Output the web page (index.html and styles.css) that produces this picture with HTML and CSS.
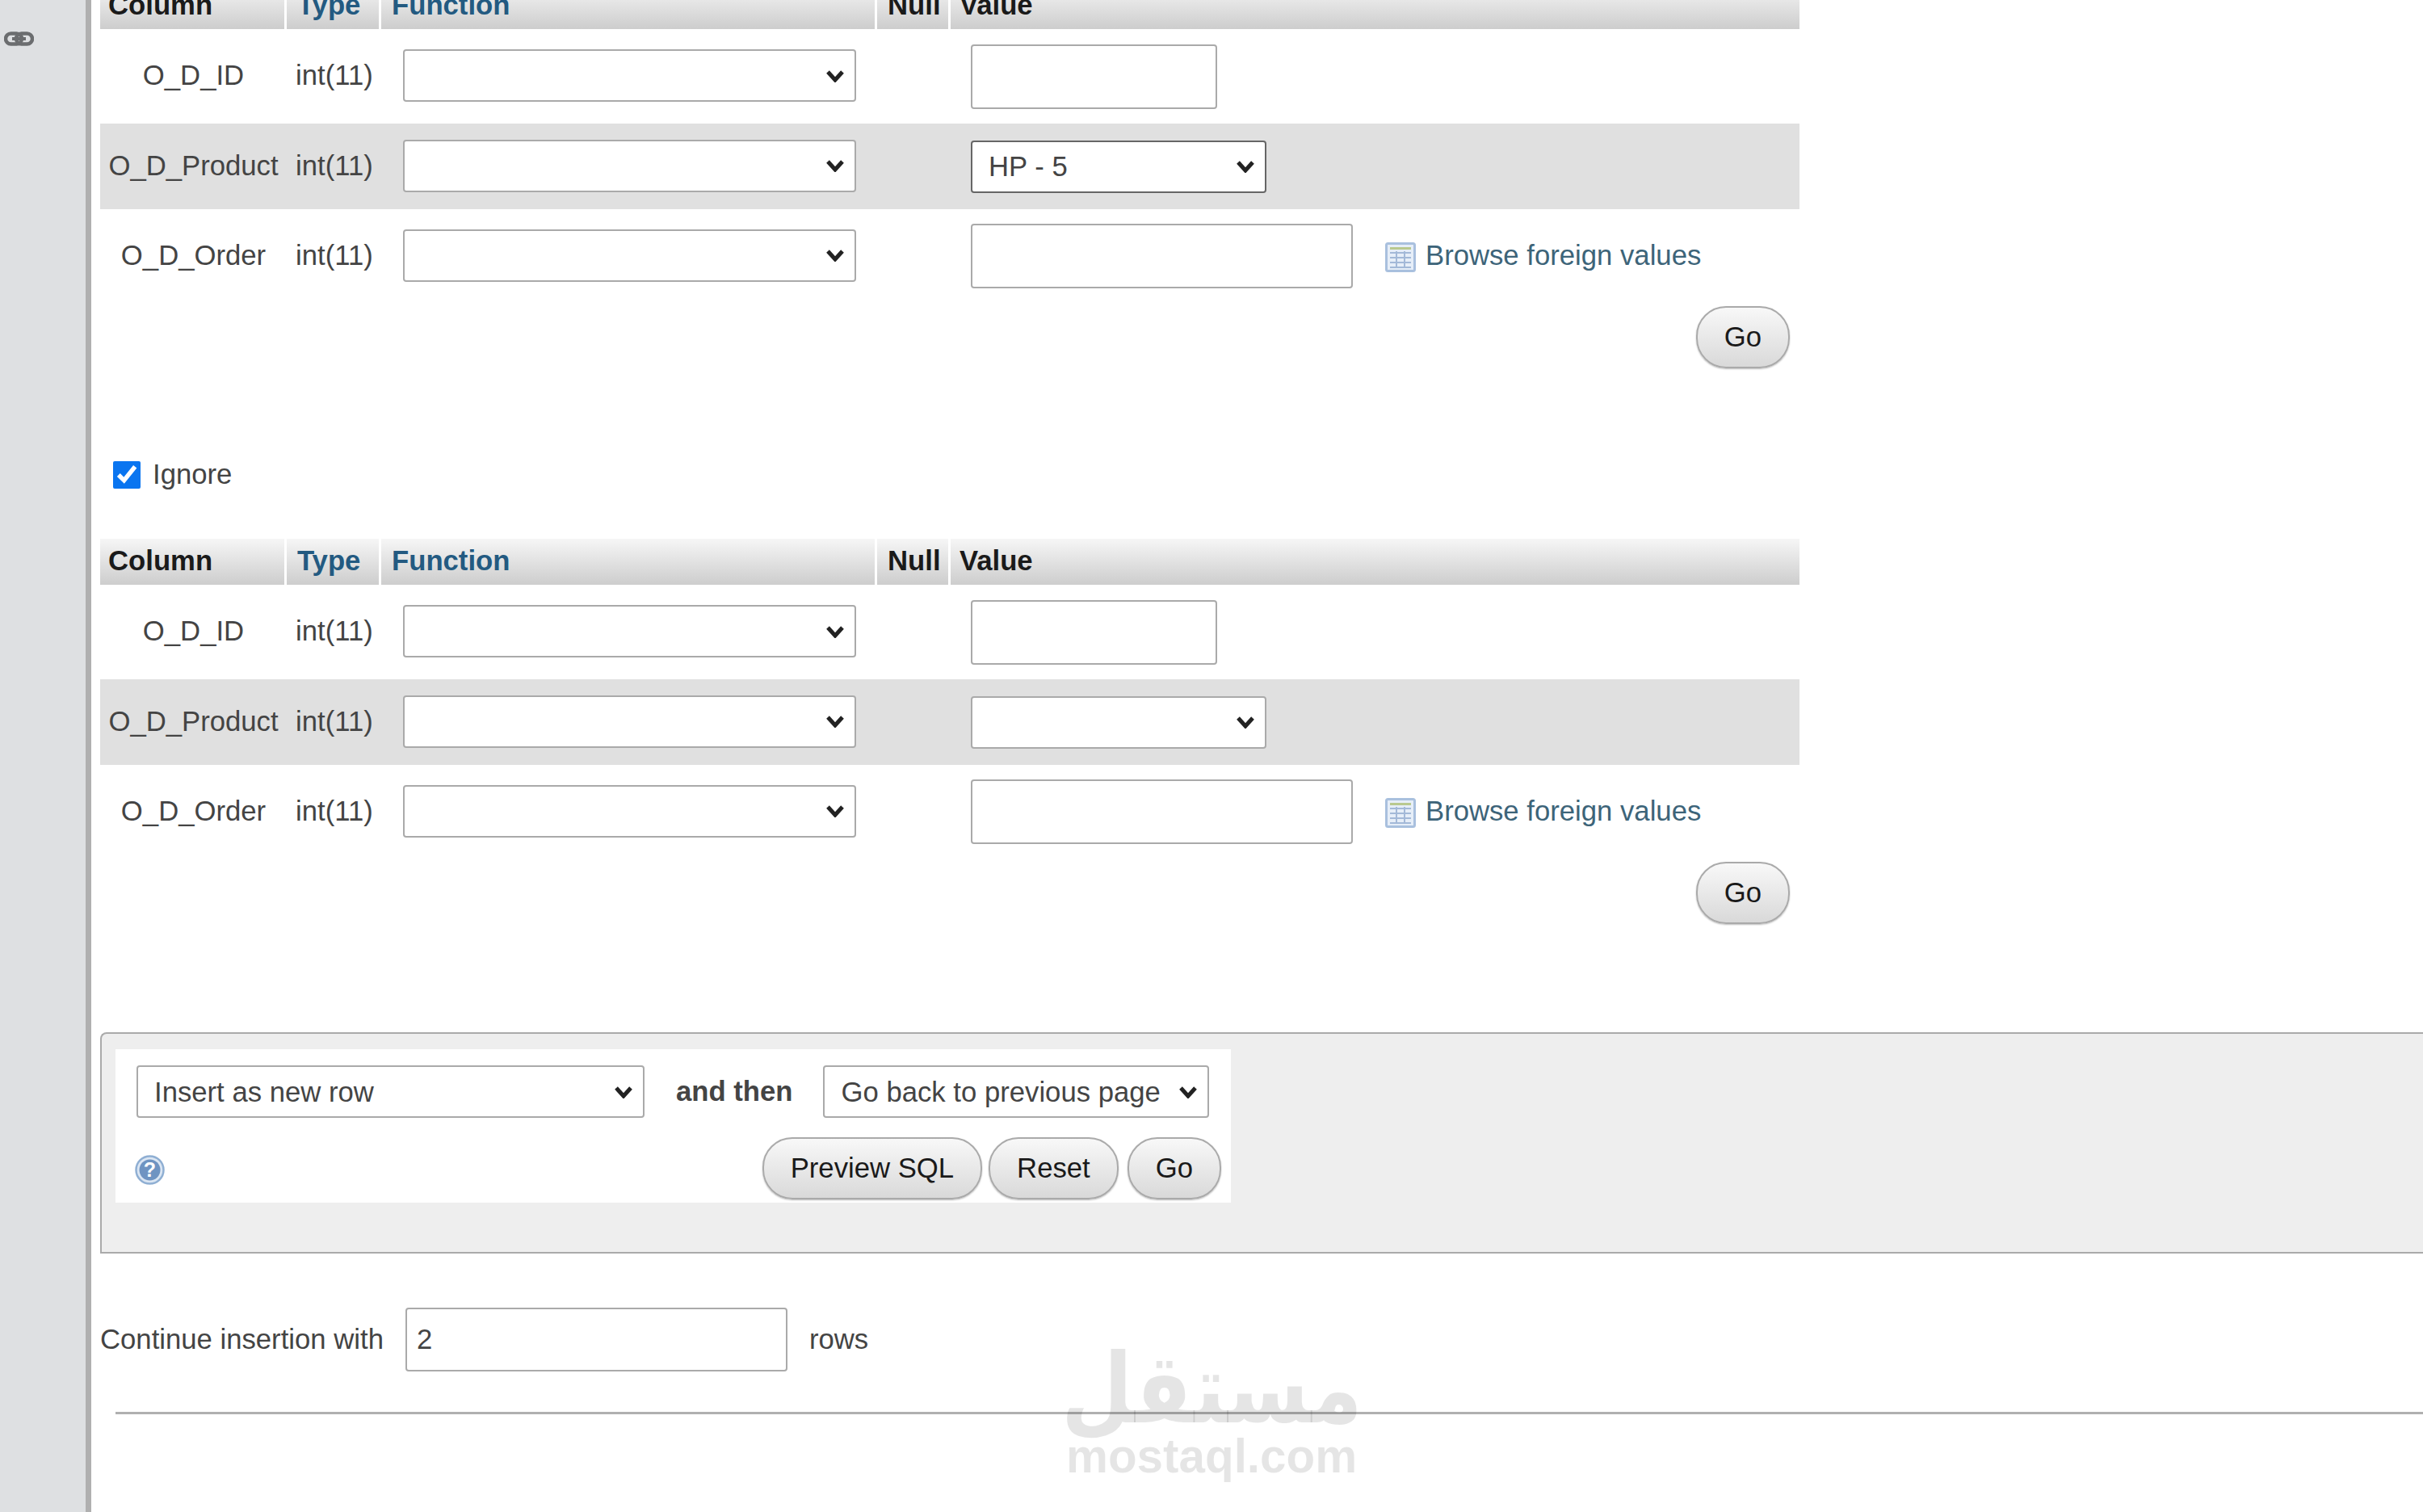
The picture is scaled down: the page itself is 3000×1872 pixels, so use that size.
FILE: index.html
```html
<!DOCTYPE html>
<html lang="en">
<head>
<meta charset="utf-8">
<title>Insert</title>
<link rel="stylesheet" href="styles.css">
</head>
<body>
<div class="page">
  <aside class="sidebar">
    <svg class="link-icon" viewBox="0 0 37 18" width="37" height="18" aria-hidden="true">
      <rect x="2" y="2.5" width="20" height="13" rx="6.5" fill="none" stroke="#6b6d6f" stroke-width="4.5"/>
      <rect x="15" y="2.5" width="20" height="13" rx="6.5" fill="none" stroke="#6b6d6f" stroke-width="4.5"/>
      <rect x="10" y="7" width="17" height="4" fill="#6b6d6f"/>
    </svg>
  </aside>
  <main class="main">
    <table class="insert-table first">
      <colgroup><col class="c-col"><col class="c-type"><col class="c-fn"><col class="c-null"><col class="c-val"></colgroup>
      <thead>
        <tr><th>Column</th><th class="link">Type</th><th class="link">Function</th><th class="mid">Null</th><th class="end">Value</th></tr>
      </thead>
      <tbody>
        <tr class="row-a"><td class="name">O_D_ID</td><td class="type">int(11)</td><td class="fn"><select class="field fn-select"><option></option></select></td><td></td><td class="val"><input class="field short" type="text"></td></tr>
        <tr class="row-b"><td class="name">O_D_Product</td><td class="type">int(11)</td><td class="fn"><select class="field fn-select"><option></option></select></td><td></td><td class="val"><select class="field fk-select active"><option>HP - 5</option></select></td></tr>
        <tr class="row-c"><td class="name">O_D_Order</td><td class="type">int(11)</td><td class="fn"><select class="field fn-select"><option></option></select></td><td></td><td class="val"><div class="val-line"><input class="field long" type="text"><a class="browse"><svg class="table-icon" viewBox="0 0 38 37" width="38" height="37" aria-hidden="true"><rect x="1.5" y="1.5" width="35" height="34" rx="2" fill="#e6eef8" stroke="#a9c0de" stroke-width="3"/><rect x="6" y="6" width="26" height="3" fill="#b9c98f"/><path d="M6 13h26M6 19h26M6 25h26M6 31h26M14 11v21M24 11v21" stroke="#a3b9d8" stroke-width="2" fill="none"/></svg><span class="browse-text">Browse foreign values</span></a></div></td></tr>
      </tbody>
      <tfoot>
        <tr class="row-foot"><td colspan="5"><button class="btn" type="button">Go</button></td></tr>
      </tfoot>
    </table>

    <label class="ignore"><input class="check" type="checkbox" checked>Ignore</label>

    <table class="insert-table">
      <colgroup><col class="c-col"><col class="c-type"><col class="c-fn"><col class="c-null"><col class="c-val"></colgroup>
      <thead>
        <tr><th>Column</th><th class="link">Type</th><th class="link">Function</th><th class="mid">Null</th><th class="end">Value</th></tr>
      </thead>
      <tbody>
        <tr class="row-a"><td class="name">O_D_ID</td><td class="type">int(11)</td><td class="fn"><select class="field fn-select"><option></option></select></td><td></td><td class="val"><input class="field short" type="text"></td></tr>
        <tr class="row-b"><td class="name">O_D_Product</td><td class="type">int(11)</td><td class="fn"><select class="field fn-select"><option></option></select></td><td></td><td class="val"><select class="field fk-select"><option></option></select></td></tr>
        <tr class="row-c"><td class="name">O_D_Order</td><td class="type">int(11)</td><td class="fn"><select class="field fn-select"><option></option></select></td><td></td><td class="val"><div class="val-line"><input class="field long" type="text"><a class="browse"><svg class="table-icon" viewBox="0 0 38 37" width="38" height="37" aria-hidden="true"><rect x="1.5" y="1.5" width="35" height="34" rx="2" fill="#e6eef8" stroke="#a9c0de" stroke-width="3"/><rect x="6" y="6" width="26" height="3" fill="#b9c98f"/><path d="M6 13h26M6 19h26M6 25h26M6 31h26M14 11v21M24 11v21" stroke="#a3b9d8" stroke-width="2" fill="none"/></svg><span class="browse-text">Browse foreign values</span></a></div></td></tr>
      </tbody>
      <tfoot>
        <tr class="row-foot"><td colspan="5"><button class="btn" type="button">Go</button></td></tr>
      </tfoot>
    </table>

    <section class="panel">
      <div class="panel-inner">
        <div class="panel-row">
          <select class="field action-select"><option>Insert as new row</option></select>
          <strong class="and-then">and then</strong>
          <select class="field after-select"><option>Go back to previous page</option></select>
        </div>
        <div class="panel-row spread">
          <svg class="help-icon" viewBox="0 0 37 37" width="37" height="37" aria-hidden="true">
            <circle cx="18.5" cy="18.5" r="17" fill="#dbe6f3" stroke="#8fafd3" stroke-width="2.5"/>
            <circle cx="18.5" cy="18.5" r="13" fill="#6f94c2"/>
            <text x="18.5" y="27" text-anchor="middle" class="help-mark">?</text>
          </svg>
          <div class="btn-group">
            <button class="btn btn-preview" type="button">Preview SQL</button>
            <button class="btn" type="button">Reset</button>
            <button class="btn" type="button">Go</button>
          </div>
        </div>
      </div>
    </section>

    <div class="continue">
      <span>Continue insertion with</span>
      <input class="field rows-input" type="text" value="2">
      <span>rows</span>
    </div>
    <hr class="rule">
  </main>
  <div class="watermark">
    <div class="wm-ar" lang="ar" dir="rtl">مستقل</div>
    <div class="wm-en">mostaql.com</div>
  </div>
</div>
</body>
</html>
```
FILE: styles.css
```css
* { box-sizing: border-box; }
html, body { margin: 0; padding: 0; background: #fff; }
body {
  font-family: "Liberation Sans", Arial, sans-serif;
  font-size: 34.7px;
  color: #444;
}
.page {
  position: relative;
  display: flex;
  width: 3000px;
  height: 1872px;
  overflow: hidden;
}
.sidebar {
  flex: 0 0 113px;
  background: #dee0e2;
  border-right: 7px solid #b0b0b0;
  padding: 39px 0 0 5px;
}
.link-icon { display: block; }
.main {
  flex: 1;
  min-width: 0;
  padding-left: 11px;
  margin-top: -21px;
}

/* insert tables */
.insert-table {
  width: 2104px;
  table-layout: fixed;
  border-collapse: separate;
  border-spacing: 0;
}
.c-col { width: 231px; }
.c-type { width: 117px; }
.c-fn { width: 614px; }
.c-null { width: 91px; }
.insert-table th {
  height: 57px;
  padding: 0 0 3px 10px;
  text-align: left;
  font-weight: bold;
  color: #1a1a1a;
  background: linear-gradient(#f6f6f6, #cdcdcd);
  border-right: 3px solid #fff;
  white-space: nowrap;
}
.insert-table th:last-child { border-right: 0; }
.insert-table th.link { color: #235a81; padding-left: 13px; }
.insert-table th.mid { padding-left: 13px; }
.insert-table th.end { padding-left: 11px; }
.insert-table td { padding: 0; vertical-align: middle; }
.row-a { height: 117px; }
.row-b { height: 106px; background: #e0e0e0; }
.row-c { height: 116px; }
.row-foot { height: 85px; }
.insert-table .row-foot td { text-align: right; padding: 4px 12px 4px 0; vertical-align: top; }
.insert-table .name { text-align: center; white-space: nowrap; padding-bottom: 2px; }
.insert-table .type { padding: 0 0 2px 11px; white-space: nowrap; }
.insert-table .fn { padding: 0 0 2px 27px; }
.insert-table .val { padding-left: 25px; }
.val-line { display: flex; align-items: center; }

/* form controls */
.field {
  display: block;
  font: inherit;
  color: #444;
  background-color: #fff;
  border: 2px solid #aaa;
  border-radius: 4px;
  outline: 0;
  padding: 0 12px;
}
select.field {
  appearance: none;
  padding: 0 40px 0 20px;
  height: 65px;
  background-image: url("data:image/svg+xml,%3Csvg xmlns='http://www.w3.org/2000/svg' viewBox='0 0 24 16'%3E%3Cpath d='M3 3l9 10 9-10' fill='none' stroke='%23222' stroke-width='5'/%3E%3C/svg%3E");
  background-repeat: no-repeat;
  background-size: 24px 16px;
  background-position: right 12px center;
}
.fn-select { width: 561px; }
.fk-select { width: 366px; }
.fk-select.active { border-color: #666; }
.short { width: 305px; height: 80px; }
.long { width: 473px; height: 80px; }
.rows-input { width: 473px; height: 79px; }
.action-select { width: 629px; }
select.after-select { width: 478px; padding-left: 21px; }

.browse {
  display: flex;
  align-items: center;
  gap: 12px;
  margin-left: 40px;
  color: #3d6479;
  white-space: nowrap;
}
.browse-text { padding-bottom: 2px; }
.table-icon { display: block; margin-top: 3px; }

.btn {
  font: inherit;
  color: #1a1a1a;
  height: 77px;
  padding: 0 33px;
  border: 2px solid #aaa;
  border-radius: 37px;
  background: linear-gradient(#f8f8f8, #d9d9d9);
  box-shadow: 0 1px 2px #bbb;
}
.btn-preview { margin-right: -3px; }

.ignore {
  display: flex;
  align-items: center;
  gap: 15px;
  height: 35px;
  margin: 110px 0 62px 16px;
}
.check {
  width: 34px;
  height: 34px;
  margin: 0;
  accent-color: #0a75f0;
}

/* bottom panel */
.panel {
  width: 2950px;
  height: 274px;
  margin-top: 130px;
  padding: 19px 0 0 17px;
  background: #eee;
  border: 2px solid #aaa;
  border-right: 0;
  border-radius: 8px 0 0 0;
}
.panel-inner {
  width: 1381px;
  height: 190px;
  padding: 20px 12px 4px 26px;
  background: #fff;
}
.panel-row { display: flex; align-items: center; }
.spread { justify-content: space-between; margin-top: 24px; margin-left: -2px; }
.and-then { margin: 0 37px 0 39px; font-weight: bold; white-space: nowrap; }
.btn-group { display: flex; gap: 11px; }
.help-icon { display: block; margin-top: 3px; }
.help-mark { font-size: 25px; font-weight: bold; fill: #fff; }

.continue {
  display: flex;
  align-items: center;
  gap: 27px;
  margin-top: 67px;
  white-space: nowrap;
}
.rule {
  height: 3px;
  margin: 50px 0 0 19px;
  border: 0;
  background: #b0b0b0;
}

/* watermark over the page */
.watermark {
  position: absolute;
  left: 1320px;
  top: 1666px;
  width: 359px;
  color: rgba(0, 0, 0, 0.1);
  pointer-events: none;
}
.wm-ar {
  height: 108px;
  font-family: "DejaVu Sans", sans-serif;
  font-size: 120px;
  font-weight: bold;
  line-height: 108px;
  white-space: nowrap;
  transform: translateX(8px) scaleX(0.85);
  transform-origin: right center;
}
.wm-en {
  font-size: 58.4px;
  font-weight: bold;
  line-height: 58px;
  text-align: center;
  white-space: nowrap;
}
```
